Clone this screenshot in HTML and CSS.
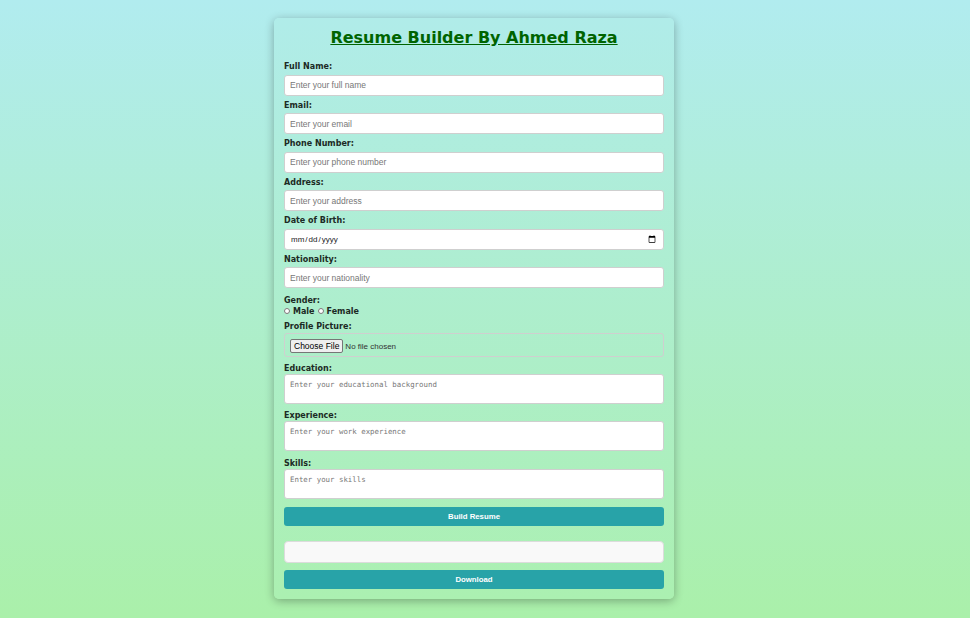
FILE: index.html
```html
<!DOCTYPE html>
<html>
<head>
<meta charset="utf-8">
<title>Resume Builder</title>
<link rel="stylesheet" href="styles.css">
</head>
<body>
<div class="card">
  <h1 class="title">Resume Builder By Ahmed Raza</h1>
  <form class="form">
    <label class="lbl">Full Name:</label>
    <input class="field" type="text" placeholder="Enter your full name">
    <label class="lbl">Email:</label>
    <input class="field" type="email" placeholder="Enter your email">
    <label class="lbl">Phone Number:</label>
    <input class="field" type="tel" placeholder="Enter your phone number">
    <label class="lbl">Address:</label>
    <input class="field" type="text" placeholder="Enter your address">
    <label class="lbl">Date of Birth:</label>
    <input class="field date" type="date">
    <label class="lbl">Nationality:</label>
    <input class="field" type="text" placeholder="Enter your nationality">
    <label class="lbl tight">Gender:</label>
    <div class="radios">
      <input class="radio" type="radio" name="g"><span>Male</span>
      <input class="radio" type="radio" name="g"><span>Female</span>
    </div>
    <label class="lbl pic">Profile Picture:</label>
    <input class="field file" type="file">
    <label class="lbl close">Education:</label>
    <textarea class="field area" placeholder="Enter your educational background"></textarea>
    <label class="lbl close">Experience:</label>
    <textarea class="field area" placeholder="Enter your work experience"></textarea>
    <label class="lbl close">Skills:</label>
    <textarea class="field area" placeholder="Enter your skills"></textarea>
    <button class="btn" type="button">Build Resume</button>
  </form>
  <div class="output"></div>
  <button class="btn" type="button">Download</button>
</div>
</body>
</html>
```
FILE: styles.css
```css
html, body {
  margin: 0;
  height: 100%;
}
body {
  background: linear-gradient(180deg, #b1ecef 0%, #aaf0aa 100%);
  font-family: "DejaVu Sans", Verdana, sans-serif;
  padding: 18px 22px 0 0;
  box-sizing: border-box;
}
.card {
  width: 400px;
  box-sizing: border-box;
  margin: 0 auto;
  padding: 9px 10px 10px;
  border-radius: 5px;
  background: linear-gradient(180deg, #b0ece9 0%, #abf0b1 100%);
  box-shadow: 0 2px 10px rgba(0, 0, 0, 0.3);
}
.title {
  margin: 0 0 13px;
  text-align: center;
  font-size: 16px;
  line-height: 22px;
  font-weight: bold;
  color: #006400;
  text-decoration: underline;
}
.form {
  display: flex;
  flex-direction: column;
}
.lbl {
  display: block;
  font-size: 8px;
  line-height: 9.5px;
  font-weight: bold;
  color: #1c2a24;
  margin-bottom: 3px;
}
.lbl.tight {
  margin: 3px 0 0;
}
.lbl.pic {
  margin-bottom: 1.5px;
}
.lbl.close {
  margin-bottom: 0.5px;
}
.field {
  display: block;
  width: 100%;
  box-sizing: border-box;
  height: 21px;
  margin: 0 0 5px;
  padding: 0 5px;
  border: 1px solid #cfcfcf;
  border-radius: 3px;
  background: #fff;
  font-family: "Liberation Sans", Arial, sans-serif;
  font-size: 8.5px;
  color: #222;
}
.field::placeholder {
  color: #777;
}
.date {
  font-size: 8px;
}
.file {
  height: 24px;
  padding: 5px;
  margin-bottom: 7px;
  background: transparent;
  font-size: 8px;
  color: #333;
}
.file::file-selector-button {
  font-family: "Liberation Sans", Arial, sans-serif;
  font-size: 8.5px;
  padding: 1px 3px;
  margin-right: 2px;
  border: 1px solid #767676;
  border-radius: 2px;
  background: #efefef;
}
.area {
  height: 30px;
  padding: 5px;
  margin-bottom: 7.5px;
  resize: none;
  font-family: "DejaVu Sans Mono", monospace;
  font-size: 7.4px;
  line-height: 9px;
}
.radios {
  display: flex;
  align-items: center;
  font-size: 8px;
  font-weight: bold;
  color: #1c2a24;
  line-height: 9px;
  margin: 1px 0 6px;
}
.radio {
  width: 6px;
  height: 6px;
  margin: 0 3px 0 0;
}
.radios span {
  margin-right: 3px;
}
.btn {
  display: block;
  width: 100%;
  height: 19px;
  padding: 0;
  border: none;
  border-radius: 3px;
  background: #28a3a8;
  color: #fff;
  font-family: "Liberation Sans", Arial, sans-serif;
  font-size: 7.8px;
  font-weight: bold;
  margin-top: 0.5px;
}
.output {
  height: 22px;
  box-sizing: border-box;
  margin: 15px 0 7px;
  border: 1px solid #dcdcdc;
  border-radius: 4px;
  background: #f9f9f9;
}
.card > .btn {
  margin-top: 0;
}
```
